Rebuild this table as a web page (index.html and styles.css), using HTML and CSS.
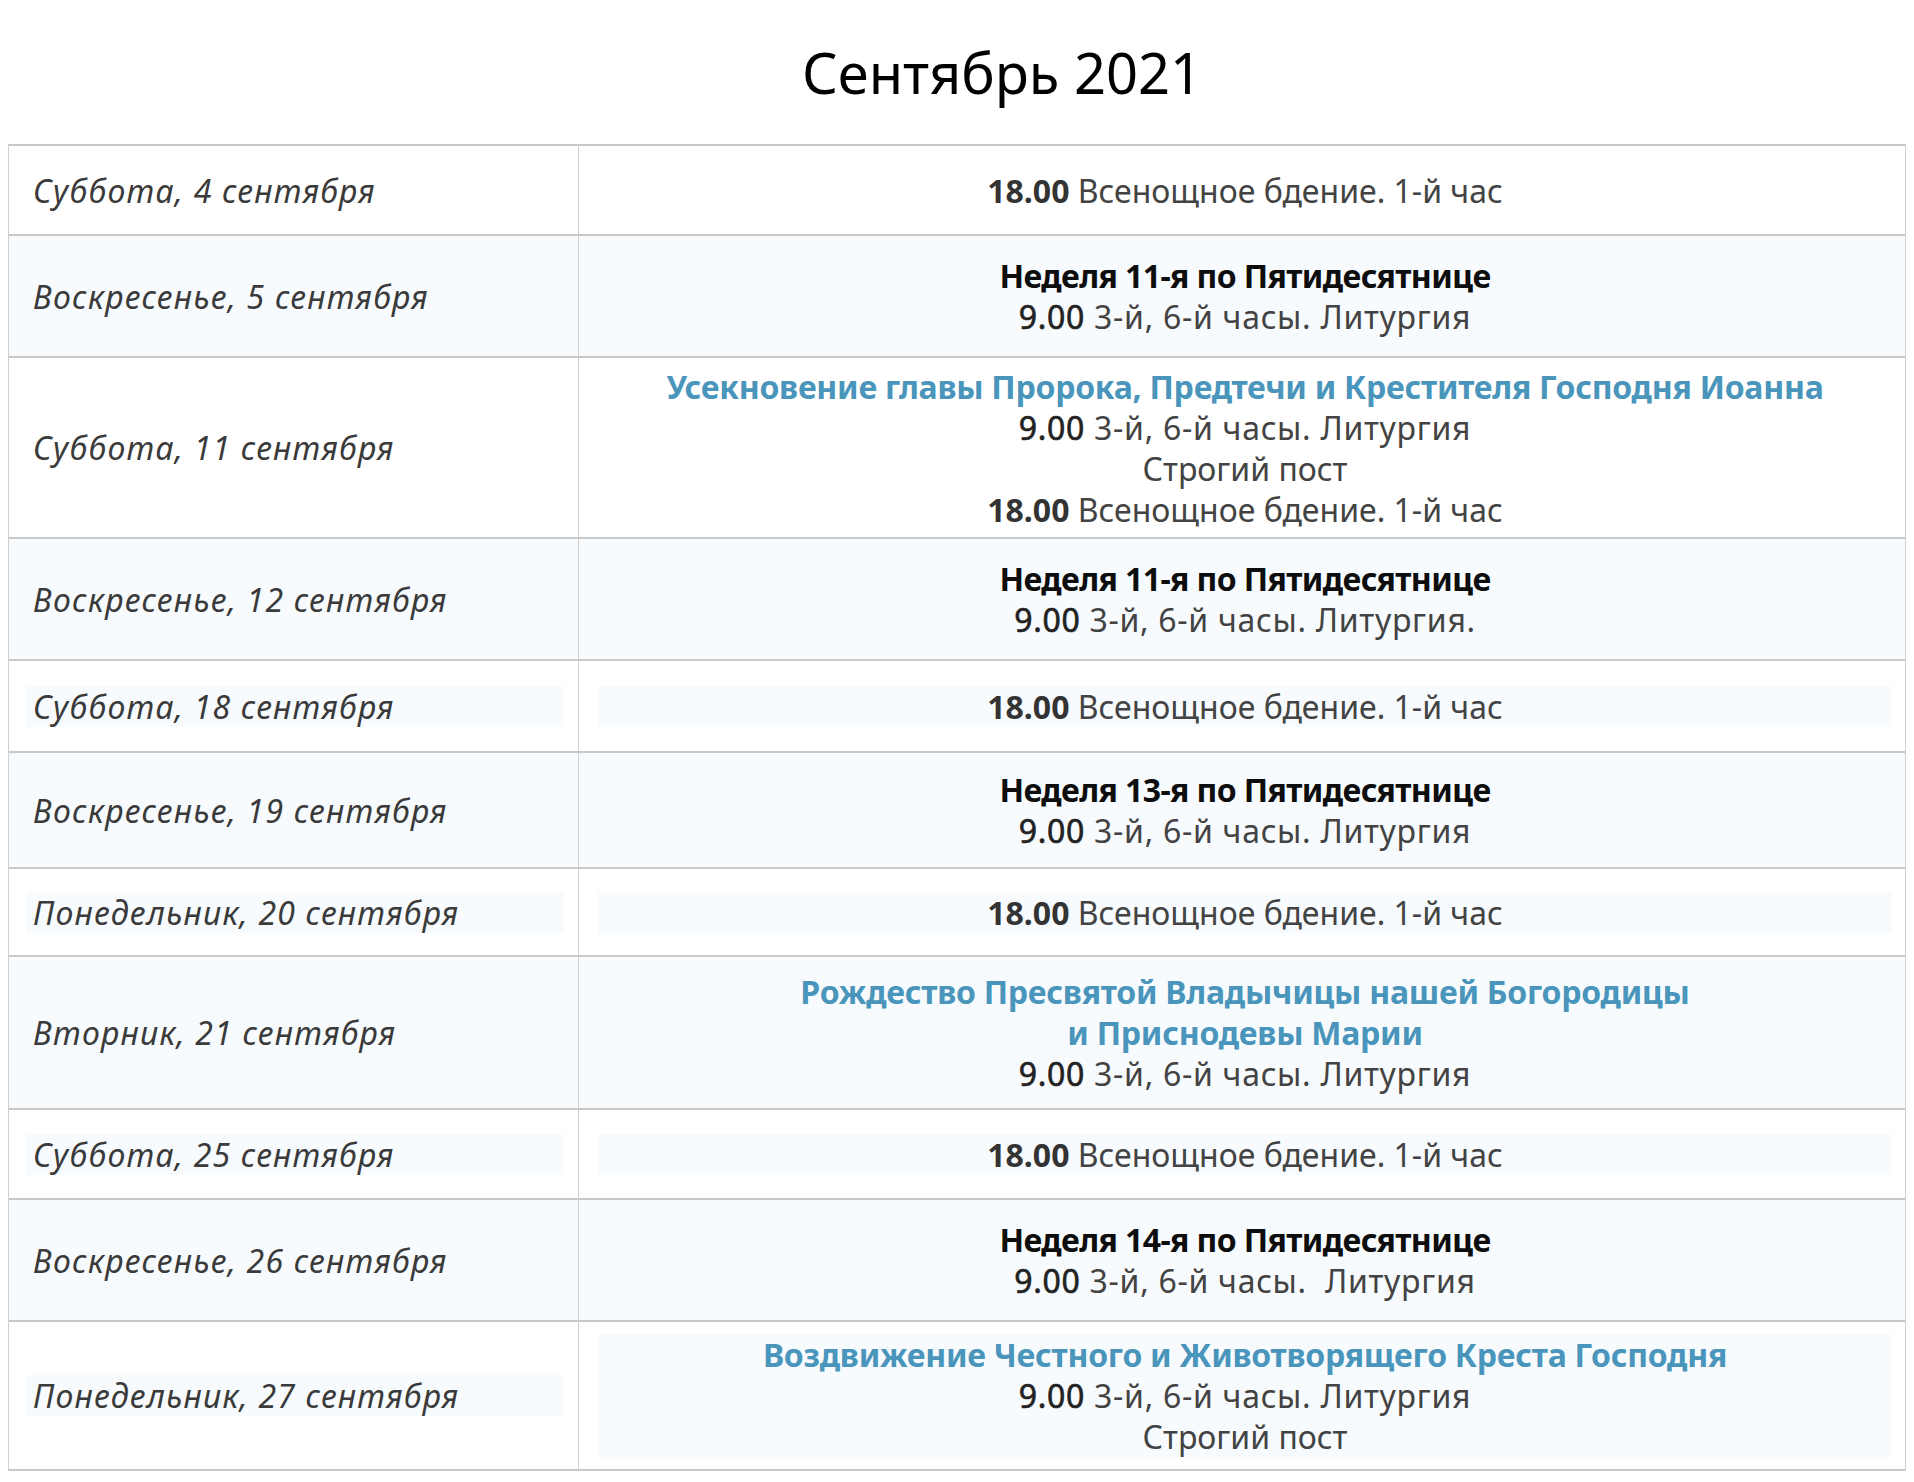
FILE: index.html
```html
<!DOCTYPE html>
<html lang="ru">
<head>
<meta charset="utf-8">
<title>Сентябрь 2021</title>
<link rel="stylesheet" href="styles.css">
</head>
<body>
<h1 class="title">Сентябрь 2021</h1>
<div class="schedule">
  <div class="row l1">
    <div class="date"><p>Суббота, 4 сентября</p></div>
    <div class="svc"><p><b>18.00</b> Всенощное бдение. 1-й час</p></div>
  </div>
  <div class="row l2 alt">
    <div class="date"><p>Воскресенье, 5 сентября</p></div>
    <div class="svc"><p><strong class="sun">Неделя 11-я по Пятидесятнице</strong><br><span class="lit"><span class="tm">9.00</span> 3-й, 6-й часы. Литургия</span></p></div>
  </div>
  <div class="row l4">
    <div class="date"><p>Суббота, 11 сентября</p></div>
    <div class="svc"><p><strong class="feast">Усекновение главы Пророка, Предтечи и Крестителя Господня Иоанна</strong><br><span class="lit"><span class="tm">9.00</span> 3-й, 6-й часы. Литургия</span><br>Строгий пост<br><b>18.00</b> Всенощное бдение. 1-й час</p></div>
  </div>
  <div class="row l2 alt">
    <div class="date"><p>Воскресенье, 12 сентября</p></div>
    <div class="svc"><p><strong class="sun">Неделя 11-я по Пятидесятнице</strong><br><span class="lit"><span class="tm">9.00</span> 3-й, 6-й часы. Литургия.</span></p></div>
  </div>
  <div class="row l1 mid hl">
    <div class="date"><p>Суббота, 18 сентября</p></div>
    <div class="svc"><p><b>18.00</b> Всенощное бдение. 1-й час</p></div>
  </div>
  <div class="row l2 short alt">
    <div class="date"><p>Воскресенье, 19 сентября</p></div>
    <div class="svc"><p><strong class="sun">Неделя 13-я по Пятидесятнице</strong><br><span class="lit"><span class="tm">9.00</span> 3-й, 6-й часы. Литургия</span></p></div>
  </div>
  <div class="row l1 short hl">
    <div class="date"><p>Понедельник, 20 сентября</p></div>
    <div class="svc"><p><b>18.00</b> Всенощное бдение. 1-й час</p></div>
  </div>
  <div class="row l3 alt">
    <div class="date"><p>Вторник, 21 сентября</p></div>
    <div class="svc"><p><strong class="feast">Рождество Пресвятой Владычицы нашей Богородицы<br>и Приснодевы Марии</strong><br><span class="lit"><span class="tm">9.00</span> 3-й, 6-й часы. Литургия</span></p></div>
  </div>
  <div class="row l1 hl">
    <div class="date"><p>Суббота, 25 сентября</p></div>
    <div class="svc"><p><b>18.00</b> Всенощное бдение. 1-й час</p></div>
  </div>
  <div class="row l2 alt">
    <div class="date"><p>Воскресенье, 26 сентября</p></div>
    <div class="svc"><p><strong class="sun">Неделя 14-я по Пятидесятнице</strong><br><span class="lit"><span class="tm">9.00</span> 3-й, 6-й часы.&nbsp; Литургия</span></p></div>
  </div>
  <div class="row l3 short hl">
    <div class="date"><p>Понедельник, 27 сентября</p></div>
    <div class="svc"><p><strong class="feast">Воздвижение Честного и Животворящего Креста Господня</strong><br><span class="lit"><span class="tm">9.00</span> 3-й, 6-й часы. Литургия</span><br>Строгий пост</p></div>
  </div>
</div>
</body>
</html>
```
FILE: styles.css
```css
html, body {
  background: #ffffff;
}
body {
  margin: 8px;
  font-family: "Noto Sans", "Open Sans", "DejaVu Sans", sans-serif;
  color: #3d3d3d;
}
.title {
  margin: 0 0 34px 0;
  padding: 26px 0 0 90px;
  font-size: 56px;
  line-height: 76px;
  font-weight: 400;
  color: #000000;
  text-align: center;
}
.schedule {
  border-top: 2px solid #c9c9c9;
  border-left: 1px solid #d0d0d0;
  border-right: 1px solid #d0d0d0;
}
.row {
  display: grid;
  grid-template-columns: 569px 1fr;
  border-bottom: 2px solid #c9c9c9;
  font-size: 32px;
  line-height: 41px;
}
.row.alt {
  background: #f7fbfe;
}
.l1 { min-height: 88px; }
.l1.mid { min-height: 90px; }
.l1.short { min-height: 86px; }
.l2 { min-height: 120px; }
.l2.short { min-height: 114px; }
.l3 { min-height: 151px; }
.l3.short { min-height: 147px; }
.l4 { min-height: 179px; }
.date, .svc {
  display: flex;
  flex-direction: column;
  justify-content: center;
}
.date {
  padding: 0 14px 0 17px;
}
.date p {
  margin: 0;
  padding: 0 7px;
  font-style: italic;
  letter-spacing: 1.2px;
  color: #3a3a3a;
}
.svc {
  border-left: 1px solid #d0d0d0;
  padding: 0 13px 0 19px;
}
.svc p {
  margin: 0;
  text-align: center;
  color: #434343;
}
.hl p {
  background: #f7fbfe;
}
.svc b {
  font-weight: 700;
  color: #333333;
}
.lit {
  letter-spacing: 0.7px;
}
.tm {
  font-weight: 400;
  color: #222222;
  -webkit-text-stroke: 0.6px #222222;
}
.sun {
  font-weight: 700;
  color: #0d0d0d;
  letter-spacing: -0.6px;
}
.feast {
  font-weight: 700;
  color: #4a95bb;
  letter-spacing: -0.25px;
}
```
